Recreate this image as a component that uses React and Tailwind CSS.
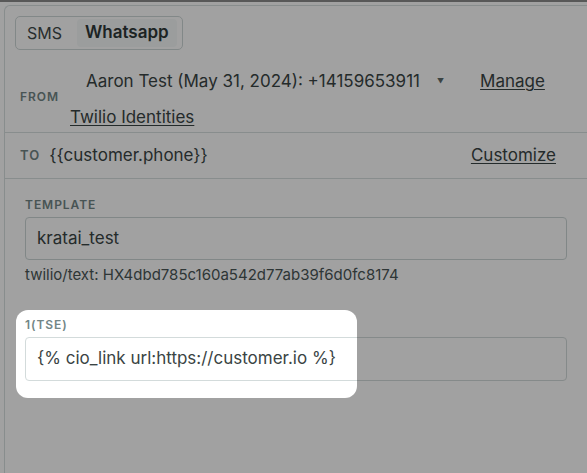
import React from 'react';

function Label({ children, className = '' }) {
  return (
    <span className={`text-[12px] font-semibold uppercase tracking-[0.08em] text-[#728686] ${className}`}>
      {children}
    </span>
  );
}

export default function App() {
  return (
    <div
      className="relative h-[473px] w-[587px] overflow-hidden bg-white text-[#3f4a4a]"
      style={{ fontFamily: 'Inter, "Liberation Sans", Arial, sans-serif' }}
    >
      <div className="h-[2px] bg-[#8c8c8c]" />
      <div className="ml-[4px] mt-[3px] h-[480px] rounded-tl-[6px] border border-r-0 border-[#d7dfdf]">
        {/* channel toggle */}
        <div className="px-[10px] pt-[10px]">
          <div className="inline-flex h-[34px] items-center rounded-[5px] border border-[#cfd8d8] pl-[4px] pr-[5px] text-[16px]">
            <span className="px-[7px] text-[#3f4a4a]">SMS</span>
            <span className="ml-[8px] rounded-[4px] bg-[#f6f9f9] px-[8px] py-[1px] text-[17px] font-semibold text-[#2f3838]">
              Whatsapp
            </span>
          </div>
        </div>

        {/* from */}
        <div className="mt-[10px] flex items-center border-b border-[#d7dfdf]">
          <Label className="w-[50px] pl-[15px] pt-[2px] box-content">From</Label>
          <div className="flex-1">
            <div className="flex h-[43px] items-center pt-[1px]">
              <span className="pl-[16px] text-[17px] text-[#3a4545]">
                Aaron Test (May 31, 2024): +14159653911
              </span>
              <span className="ml-[17px] text-[7px] text-[#5c6a6a]">▼</span>
              <a className="ml-[36px] text-[17px] text-[#3a4545] underline underline-offset-2">Manage</a>
            </div>
            <div className="flex h-[29px] items-center">
              <a className="text-[17px] text-[#3a4545] underline underline-offset-2">Twilio Identities</a>
            </div>
          </div>
        </div>

        {/* to */}
        <div className="flex h-[46px] items-center border-b border-[#d7dfdf] pl-[15px] pr-[31px]">
          <Label className="text-[13px]">To</Label>
          <span className="ml-[9px] text-[17px] text-[#3a4545]">{'{{customer.phone}}'}</span>
          <a className="ml-auto text-[17px] text-[#3a4545] underline underline-offset-2">Customize</a>
        </div>

        {/* template */}
        <div className="pl-[20px] pr-[20px] pt-[19px]">
          <Label className="block leading-[14px]">Template</Label>
          <div className="mt-[5px] flex h-[43px] items-center rounded-[4px] border border-[#cdd6d6] pl-[11px] text-[17px] text-[#3a4545]">
            kratai_test
          </div>
          <div className="mt-[7px] text-[15px] leading-[16px] text-[#4a5656]">
            twilio/text: HX4dbd785c160a542d77ab39f6d0fc8174
          </div>

          <Label className="mt-[35px] block leading-[14px] text-[#5f7070]">1(TSE)</Label>
          <div className="mt-[5px] flex h-[44px] items-center rounded-[4px] border border-[#d3dbdb] pl-[11px] text-[17px] text-[#3a4444]">
            {'{% cio_link url:https://customer.io %}'}
          </div>
        </div>
      </div>

      {/* tour spotlight */}
      <div className="pointer-events-none absolute left-[16px] top-[310px] h-[88px] w-[341px] rounded-[12px] shadow-[0_0_0_9999px_rgba(0,0,0,0.37)]" />
    </div>
  );
}
